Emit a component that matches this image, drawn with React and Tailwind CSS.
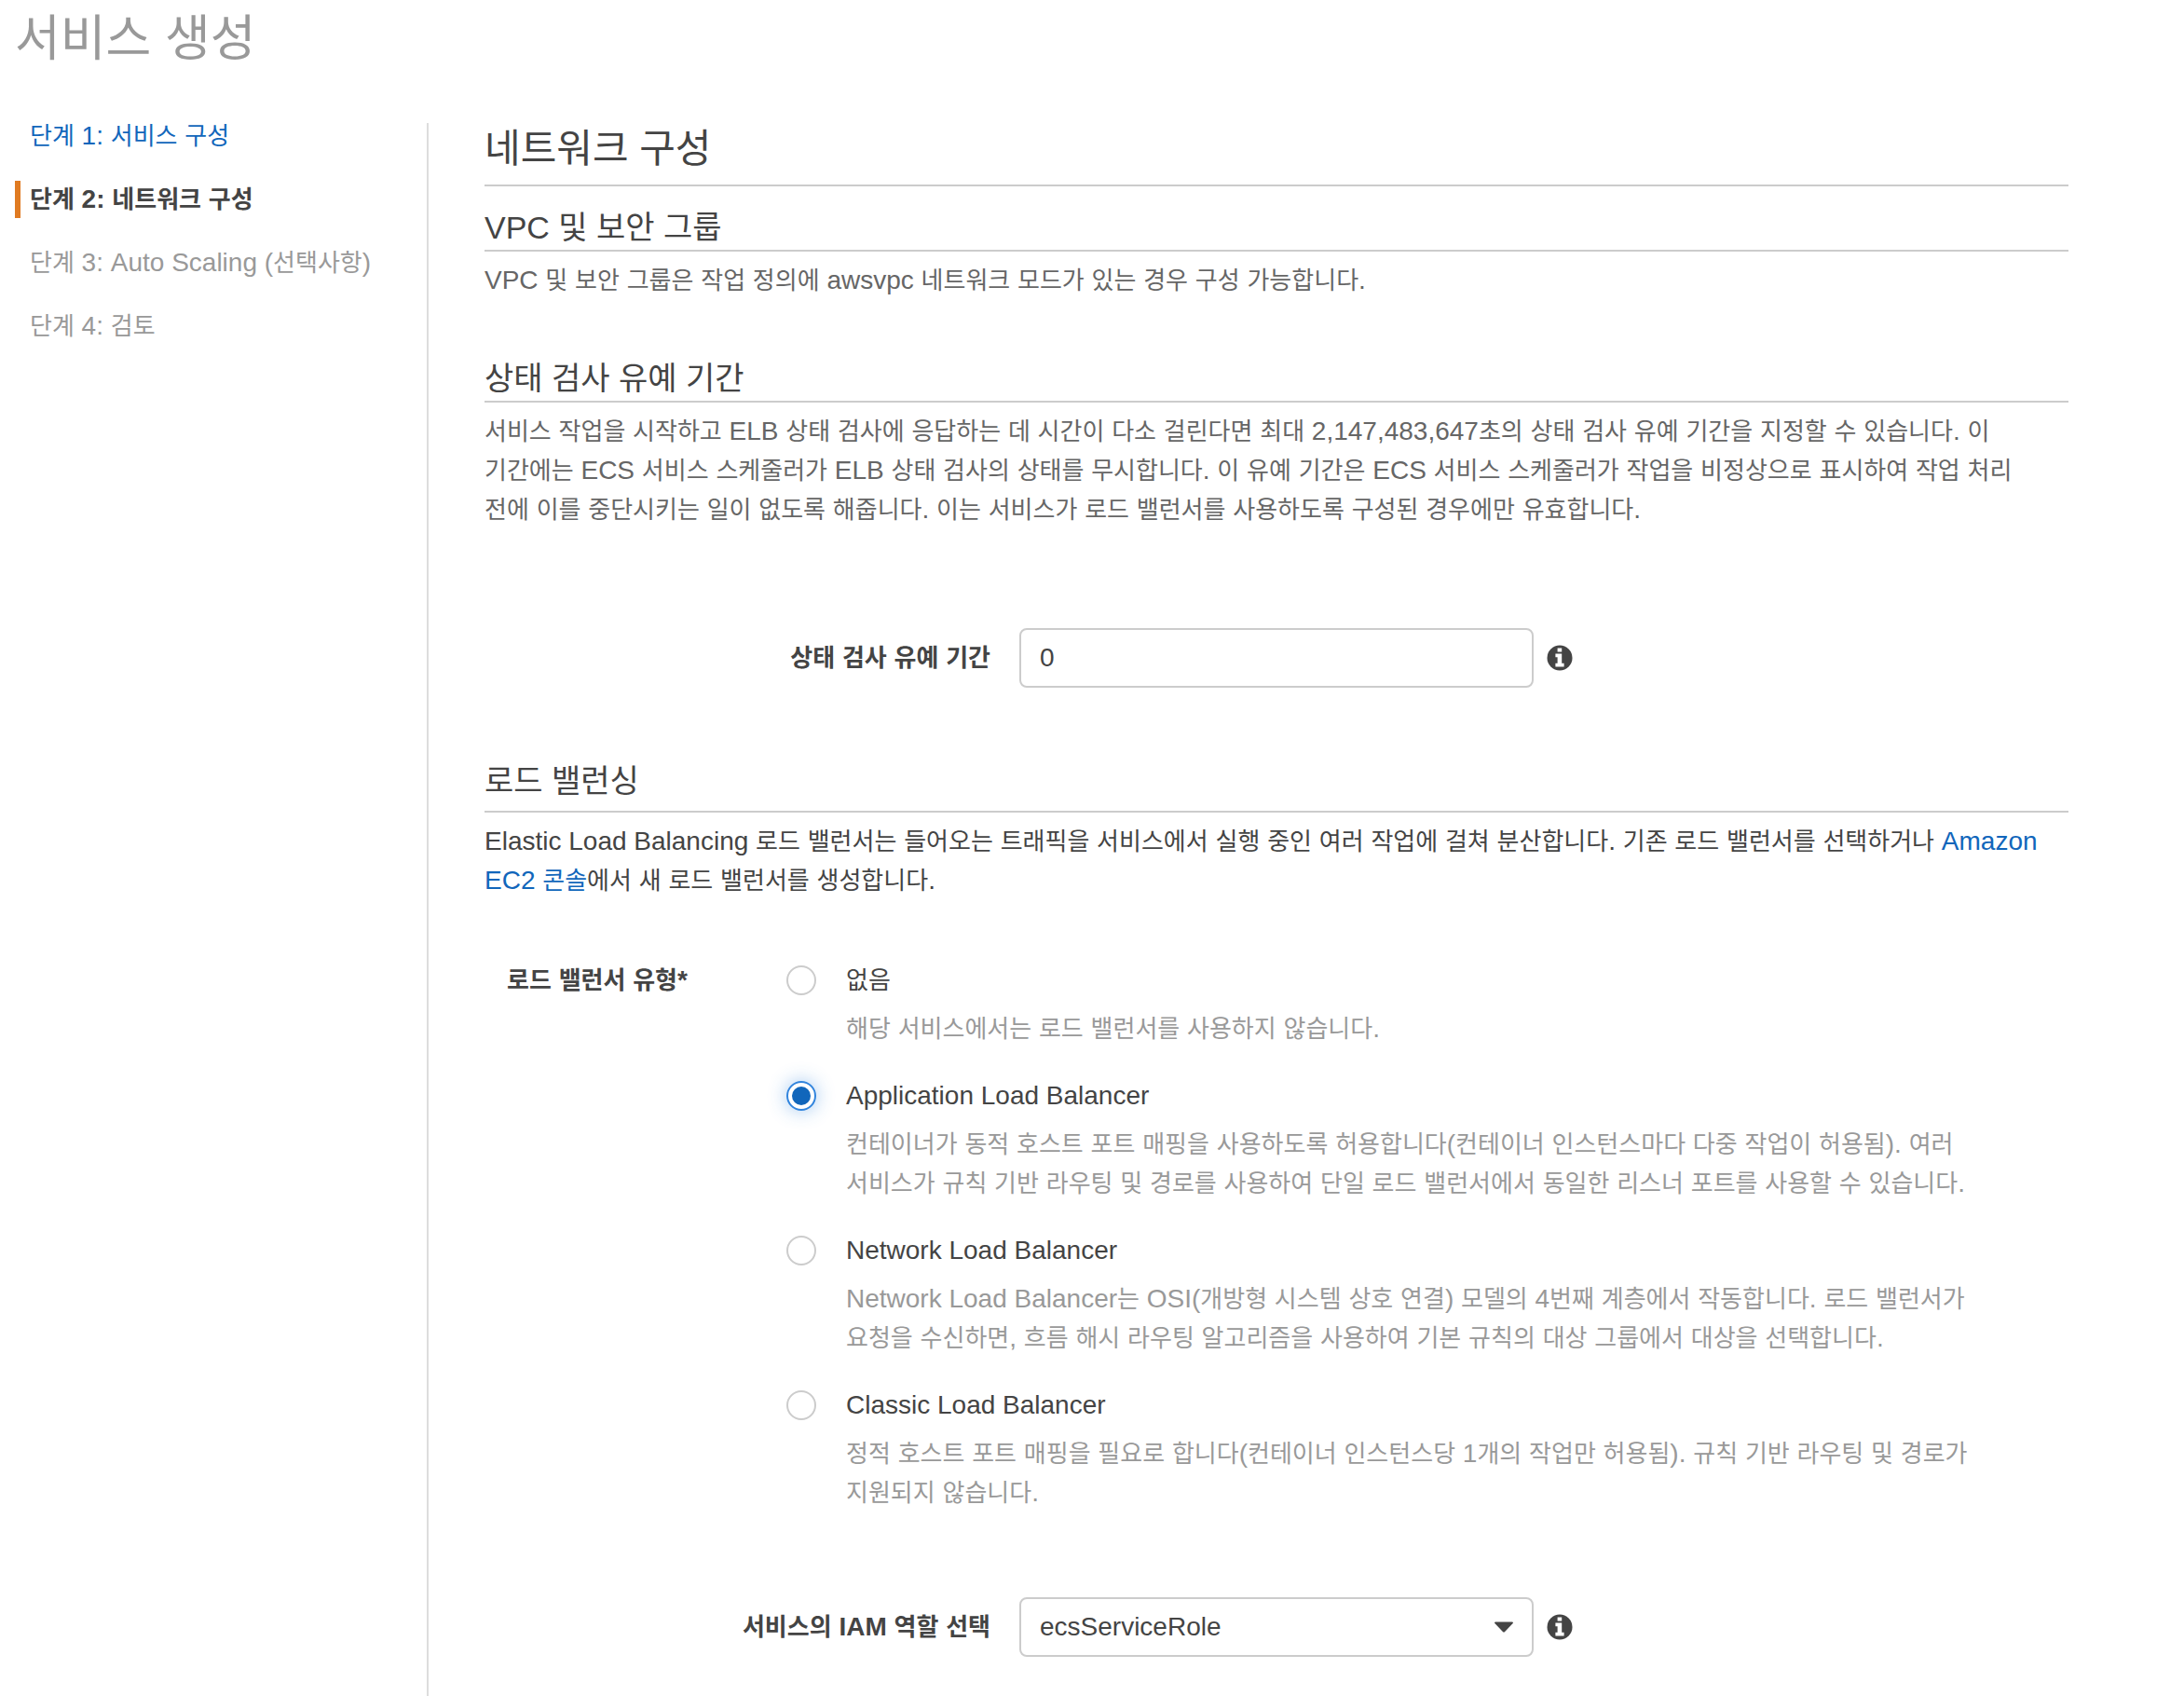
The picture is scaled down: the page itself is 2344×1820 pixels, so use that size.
import { useState } from 'react'

const steps = [
  { id: 1, label: '단계 1: 서비스 구성', state: 'done' },
  { id: 2, label: '단계 2: 네트워크 구성', state: 'current' },
  { id: 3, label: '단계 3: Auto Scaling (선택사항)', state: 'todo' },
  { id: 4, label: '단계 4: 검토', state: 'todo' },
]

const stepColors = {
  done: 'border-transparent text-[#1166bb]',
  current: 'border-[#e07b22] text-[#444] font-bold',
  todo: 'border-transparent text-[#999]',
}

const balancers = [
  { id: 'none', name: '없음', desc: '해당 서비스에서는 로드 밸런서를 사용하지 않습니다.' },
  { id: 'alb', name: 'Application Load Balancer', desc: '컨테이너가 동적 호스트 포트 매핑을 사용하도록 허용합니다(컨테이너 인스턴스마다 다중 작업이 허용됨). 여러 서비스가 규칙 기반 라우팅 및 경로를 사용하여 단일 로드 밸런서에서 동일한 리스너 포트를 사용할 수 있습니다.' },
  { id: 'nlb', name: 'Network Load Balancer', desc: 'Network Load Balancer는 OSI(개방형 시스템 상호 연결) 모델의 4번째 계층에서 작동합니다. 로드 밸런서가 요청을 수신하면, 흐름 해시 라우팅 알고리즘을 사용하여 기본 규칙의 대상 그룹에서 대상을 선택합니다.' },
  { id: 'clb', name: 'Classic Load Balancer', desc: '정적 호스트 포트 매핑을 필요로 합니다(컨테이너 인스턴스당 1개의 작업만 허용됨). 규칙 기반 라우팅 및 경로가 지원되지 않습니다.' },
]

// Hangul is set a step smaller than the Latin text around it
function Ko({ children }) {
  return children.split(/([가-힣]+)/).map((part, i) =>
    i % 2 ? <span key={i} className="text-[26px] leading-none">{part}</span> : part
  )
}

function SectionTitle({ children, className = '' }) {
  return (
    <h3 className={`border-b-2 border-[#ccc] text-[34px] leading-[48px] ${className}`}>{children}</h3>
  )
}

function InfoButton() {
  return (
    <button type="button" aria-label="정보" className="ml-3.5">
      <svg viewBox="0 0 28 28" className="size-7">
        <circle cx="14" cy="14" r="13.5" fill="#444" />
        <path fill="#fff" d="M11.6 3.4h4.6v4h-4.6zM9.4 9.6h6.8v10.2h2.4v3.6H9.4v-3.6h2.2v-6.6H9.4z" />
      </svg>
    </button>
  )
}

export default function CreateService() {
  const [grace, setGrace] = useState('0')
  const [balancer, setBalancer] = useState('alb')
  const [role, setRole] = useState('ecsServiceRole')

  return (
    <div className="flex min-h-screen flex-col bg-white font-['Liberation_Sans','Noto_Sans_CJK_KR',sans-serif] text-[28px] leading-[42px] break-keep text-[#444]">
      <h1 className="px-4 pt-1 text-[53px] leading-[76px] text-[#999]">서비스 생성</h1>

      <div className="mt-13 flex flex-1">
        {/* Wizard steps */}
        <nav className="w-[460px] shrink-0 border-r-2 border-[#ddd] pl-4">
          <ol className="-mt-1.5 space-y-7">
            {steps.map(s => (
              <li key={s.id}>
                <a href={`#step-${s.id}`} aria-current={s.state === 'current' ? 'step' : undefined}
                  className={`block border-l-6 pl-2.5 leading-10 whitespace-nowrap ${stepColors[s.state]}`}>
                  <Ko>{s.label}</Ko>
                </a>
              </li>
            ))}
          </ol>
        </nav>

        <main className="mr-31 ml-15 min-w-0 flex-1 pb-10">
          <h2 className="border-b-2 border-[#ccc] pb-2.5 text-[42px] leading-14">네트워크 구성</h2>

          <section className="mt-5">
            <SectionTitle>VPC 및 보안 그룹</SectionTitle>
            <p className="mt-2.5 pr-2 text-[#666]"><Ko>VPC 및 보안 그룹은 작업 정의에 awsvpc 네트워크 모드가 있는 경우 구성 가능합니다.</Ko></p>
          </section>

          <section className="mt-15">
            <SectionTitle>상태 검사 유예 기간</SectionTitle>
            <p className="mt-2.5 pr-2 text-[#666]">
              <Ko>서비스 작업을 시작하고 ELB 상태 검사에 응답하는 데 시간이 다소 걸린다면 최대 2,147,483,647초의 상태 검사 유예 기간을 지정할 수 있습니다. 이 기간에는 ECS 서비스 스케줄러가 ELB 상태 검사의 상태를 무시합니다. 이 유예 기간은 ECS 서비스 스케줄러가 작업을 비정상으로 표시하여 작업 처리 전에 이를 중단시키는 일이 없도록 해줍니다. 이는 서비스가 로드 밸런서를 사용하도록 구성된 경우에만 유효합니다.</Ko>
            </p>
            <div className="mt-[106px] flex items-center">
              <label htmlFor="grace" className="w-[543px] text-right font-bold"><Ko>상태 검사 유예 기간</Ko></label>
              <input id="grace" type="text" value={grace} onChange={e => setGrace(e.target.value)}
                className="ml-[31px] h-16 w-[552px] rounded-lg border-2 border-[#ccc] px-5" />
              <InfoButton />
            </div>
          </section>

          <section className="mt-[76px]">
            <SectionTitle className="pb-2">로드 밸런싱</SectionTitle>
            <p className="mt-2.5 pr-2">
              <Ko>Elastic Load Balancing 로드 밸런서는 들어오는 트래픽을 서비스에서 실행 중인 여러 작업에 걸쳐 분산합니다. 기존 로드 밸런서를 선택하거나 </Ko>
              <a href="#ec2" className="text-[#1166bb]"><Ko>Amazon EC2 콘솔</Ko></a>
              <Ko>에서 새 로드 밸런서를 생성합니다.</Ko>
            </p>

            <div role="radiogroup" aria-labelledby="lb-type" className="mt-[65px] flex">
              <div id="lb-type" className="w-[324px] shrink-0 pl-6 font-bold"><Ko>로드 밸런서 유형*</Ko></div>
              <div className="flex-1 space-y-[30px] pr-20">
                {balancers.map(b => (
                  <div key={b.id} className="flex items-start">
                    <input id={b.id} type="radio" name="balancer" checked={balancer === b.id} onChange={() => setBalancer(b.id)}
                      className="mt-[5px] grid size-8 shrink-0 appearance-none place-content-center rounded-full border-2 border-[#ccc] before:size-5 before:rounded-full checked:border-[#3184dd] checked:shadow-[0_0_20px_rgba(49,132,221,0.45)] checked:before:bg-[#1166bb]" />
                    <div className="ml-8">
                      <label htmlFor={b.id} className="block"><Ko>{b.name}</Ko></label>
                      <p className="mt-2.5 text-[#999]"><Ko>{b.desc}</Ko></p>
                    </div>
                  </div>
                ))}
              </div>
            </div>

            <div className="mt-[91px] flex items-center">
              <label htmlFor="role" className="w-[543px] text-right font-bold"><Ko>서비스의 IAM 역할 선택</Ko></label>
              <div className="relative ml-[31px]">
                <select id="role" value={role} onChange={e => setRole(e.target.value)}
                  className="block h-16 w-[552px] appearance-none rounded-lg border-2 border-[#ccc] bg-white px-5">
                  <option value="ecsServiceRole">ecsServiceRole</option>
                </select>
                <svg viewBox="0 0 20 12" className="pointer-events-none absolute top-[26px] right-[22px] h-3 w-5 fill-[#444]">
                  <path d="M1 .5h18a.9.9 0 0 1 .7 1.5l-8.6 9a1.5 1.5 0 0 1-2.2 0L.3 2A.9.9 0 0 1 1 .5z" />
                </svg>
              </div>
              <InfoButton />
            </div>
          </section>
        </main>
      </div>
    </div>
  )
}
